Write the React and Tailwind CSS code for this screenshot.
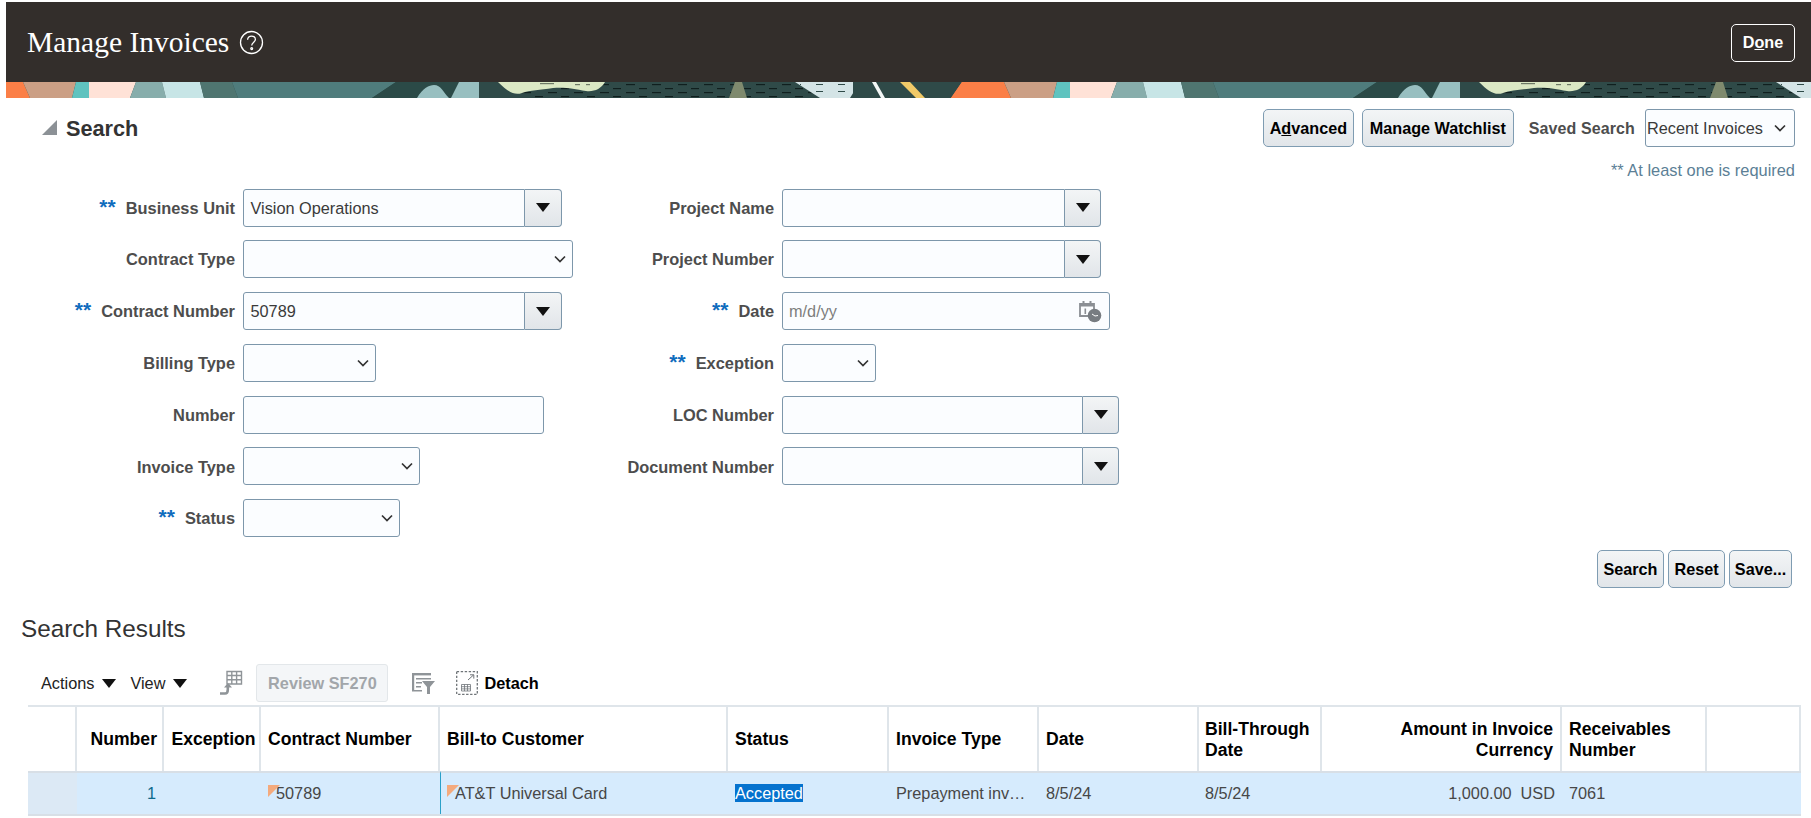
import React from "react";

const Chevron = ({ className = "" }) => (
  <svg width="14" height="14" viewBox="0 0 14 14" className={className} fill="none" stroke="#333" strokeWidth="1.7">
    <path d="M2 4.5 L7 9.5 L12 4.5" />
  </svg>
);

const Tri = ({ w = 14, h = 9 }) => (
  <svg width={w} height={h} viewBox="0 0 14 9"><path d="M0 0 H14 L7 9 Z" fill="#111" /></svg>
);

const inputCls = "h-[38px] border border-[#7d97ab] bg-[#fbfdff] rounded-[3px] flex items-center px-[6px] text-[16.3px] text-[#3a3a3a] shrink-0";
const gradient = "bg-gradient-to-b from-[#f3f5f6] to-[#e1e5e9]";

const Combo = ({ w, btn = 37, value }) => (
  <div className="flex h-[38px] shrink-0">
    <div style={{ width: w }} className="h-[38px] border border-[#7d97ab] bg-[#fbfdff] rounded-l-[3px] flex items-center pl-[6.5px] pt-[1px] text-[16.3px] text-[#3a3a3a]">{value}</div>
    <div style={{ width: btn }} className={`h-[38px] border border-l-0 border-[#7d97ab] rounded-r-[4px] flex items-center justify-center ${gradient}`}>
      <Tri />
    </div>
  </div>
);

const Select = ({ w }) => (
  <div style={{ width: w }} className={`${inputCls} justify-end pr-[5px]`}>
    <Chevron />
  </div>
);

const Row = ({ label, req, lw, gap, children }) => (
  <div className="flex items-center h-[38px]">
    <div style={{ width: lw, marginRight: gap }} className="pt-[1px] text-right text-[16.4px] font-bold text-[#4d4d4d] whitespace-nowrap shrink-0">
      {req && <span className="text-[#0f6cbd] text-[21px] leading-[16px] mr-[10px]">**</span>}
      {label}
    </div>
    {children}
  </div>
);

const Btn = ({ children, w, className = "" }) => (
  <button style={{ width: w }} className={`h-[38px] border border-[#7f9cb2] rounded-[5px] text-[16.2px] font-bold text-black flex items-center justify-center whitespace-nowrap ${gradient} ${className}`}>
    {children}
  </button>
);

const BannerTile = () => (
  <g>
    <polygon points="-19,0 23,0 30,16 -30,16" fill="#fb7f47" />
    <polygon points="23,0 76,0 72,16 30,16" fill="#cb9f85" />
    <polygon points="76,0 89,0 89,16 72,16" fill="#5fc3bf" />
    <polygon points="89,0 136,0 130,16 89,16" fill="#ffe2d7" />
    <polygon points="136,0 162,0 166,16 130,16" fill="#87adab" />
    <polygon points="162,0 200,0 204,16 166,16" fill="#c7e5e6" />
    <polygon points="200,0 232,0 238,16 204,16" fill="#4f7570" />
    <polygon points="232,0 396,0 372,16 238,16" fill="#4f7c7c" />
    <polygon points="396,0 482,0 482,16 372,16" fill="#2b4a47" />
    <path d="M417 16 C423 6 429 3 434 3 C441 3 443 10 449 16 Z" fill="#98bfc0" />
    <polygon points="459,0 479,0 479,16 451,16" fill="#98bfc0" />
    <rect x="479" y="0" width="341" height="16" fill="#2f4a48" />
    <rect x="520" y="0" width="300" height="16" fill="url(#dash)" />
    <path d="M498 0 L605 0 C601 7 594 10 586 9 C574 7 566 5 553 6 C540 8 530 8 522 11 C514 14 507 9 498 0 Z" fill="#dbe8c4" />
    <rect x="540" y="1" width="14" height="1.2" fill="#6d7a66" />
    <rect x="575" y="2" width="5" height="1.2" fill="#6d7a66" />
    <rect x="586" y="2" width="4" height="1.2" fill="#6d7a66" />
    <polygon points="735,0 742,0 747,16 729,16" fill="#7f8a6e" />
    <polygon points="795,0 860,0 850,16 820,16" fill="#d4e4e6" />
    <rect x="800" y="0" width="50" height="14" fill="url(#dash2)" />
    <rect x="853" y="0" width="112" height="16" fill="#2f4a48" />
    <polygon points="872,0 876,0 885,16 881,16" fill="#f4f7f6" />
    <polygon points="900,0 910,0 925,16 916,16" fill="#f1ca68" />
    <polygon points="962,0 1000,0 1000,16 951,16" fill="#fb7f47" />
  </g>
);

const Banner = () => (
  <svg width="1805" height="16" viewBox="6 0 1805 16" className="block">
    <defs>
      <pattern id="dash" width="26" height="8" patternUnits="userSpaceOnUse">
        <rect x="2" y="2" width="9" height="1.2" fill="#101f1e" />
        <rect x="15" y="6" width="8" height="1.2" fill="#101f1e" />
      </pattern>
      <pattern id="dash2" width="22" height="7" patternUnits="userSpaceOnUse">
        <rect x="2" y="2" width="7" height="1" fill="#2f4a48" />
      </pattern>
    </defs>
    <rect x="0" y="0" width="1811" height="16" fill="#2f4a48" />
    <BannerTile />
    <g transform="translate(981 0)"><BannerTile /></g>
    <g transform="translate(1962 0)"><BannerTile /></g>
  </svg>
);

const Help = () => (
  <svg width="25" height="25" viewBox="0 0 25 25" fill="none" stroke="#fff" strokeWidth="1.3">
    <circle cx="12.5" cy="12.5" r="11" />
    <path d="M8.6 9.8 C8.6 7.4 10.4 6.2 12.5 6.2 C14.8 6.2 16.4 7.6 16.4 9.6 C16.4 12.2 12.7 12.4 12.7 15.6" />
    <circle cx="12.7" cy="18.6" r="0.9" />
  </svg>
);

const CalClock = () => (
  <svg width="24" height="24" viewBox="0 0 24 24">
    <path d="M2 5 H16 V17 H2 Z" fill="none" stroke="#8b8f94" strokeWidth="1.8" />
    <rect x="2" y="4" width="14" height="3.5" fill="#8b8f94" />
    <rect x="4.5" y="2" width="2" height="3.5" fill="#8b8f94" />
    <rect x="11.5" y="2" width="2" height="3.5" fill="#8b8f94" />
    <rect x="6.5" y="9.5" width="1.6" height="5.5" fill="#8b8f94" />
    <circle cx="16.5" cy="16.5" r="6.8" fill="#777c81" />
    <path d="M14 15 L17 17 L20 16.5" stroke="#fff" strokeWidth="1" fill="none" />
  </svg>
);

const TableArrow = () => (
  <svg width="24" height="26" viewBox="0 0 24 26" fill="none" stroke="#8f9498" strokeWidth="1.4">
    <path d="M8 1.5 H22.5 V14 H8 Z M8 5.5 H22.5 M8 9.8 H22.5 M12.8 1.5 V14 M17.6 1.5 V14" />
    <path d="M1 23.5 H6 C8 23.5 8.8 22 8.8 19.5 V15" strokeWidth="2.6" />
    <path d="M5 17.5 L9 13 L13 17.5 Z" fill="#8f9498" stroke="none" />
  </svg>
);

const FilterLines = () => (
  <svg width="24" height="24" viewBox="0 0 24 24">
    <g fill="#8f9498">
      <rect x="1" y="2" width="19" height="2.4" />
      <rect x="1" y="2" width="2.2" height="18" />
      <rect x="5" y="7" width="15" height="1.5" />
      <rect x="5" y="11" width="6" height="1.5" />
      <rect x="5" y="15" width="5" height="1.5" />
      <rect x="1" y="19" width="10" height="1.5" />
      <path d="M11 10 H24 L19 16 V23 H16 V16 Z" />
    </g>
  </svg>
);

const DetachIcon = () => (
  <svg width="22" height="24" viewBox="0 0 22 24" fill="none" stroke="#6f7478">
    <rect x="0.7" y="0.7" width="20.6" height="22.6" strokeDasharray="2.4 1.6" strokeWidth="1.3" />
    <path d="M5.5 13.5 H14.5 V20 H5.5 Z M5.5 15.7 H14.5 M5.5 17.9 H14.5 M8.5 13.5 V20 M11.5 13.5 V20" strokeWidth="0.8" />
    <path d="M12 9 L17.5 4 M14 3.8 H17.8 V7.6" strokeWidth="1" />
  </svg>
);

const PeachTri = ({ left }) => (
  <svg width="12" height="12" viewBox="0 0 12 12" style={{ left }} className="absolute top-[12px]">
    <polygon points="0,0 12,0 0,12" fill="#f4aa7d" />
  </svg>
);

const head = "px-[7px] pt-[1px] flex items-center border-r-2 border-[#dfe5ea] text-[17.6px] font-bold text-black leading-[21px]";
const cell = "relative px-[7px] pb-[1px] flex items-center text-[16.3px] text-[#474747] whitespace-nowrap bg-[#d6ebfd] border-t-2 border-[#d8dfe6]";

export default function App() {
  return (
    <div className="relative w-[1811px] h-[818px] overflow-hidden bg-white pt-[2px] font-['Liberation_Sans',Arial,sans-serif]">
      <div className="pl-[6px]">
        <div className="h-[80px] bg-[#332e2b] flex items-center justify-between pl-[21px] pr-[16px]">
          <div className="flex items-center gap-[10px]">
            <span className="text-white text-[29.5px] font-['Liberation_Serif',serif]">Manage Invoices</span>
            <Help />
          </div>
          <button className="w-[64px] h-[38px] mt-[1px] border border-white rounded-[5px] text-white font-bold text-[16.2px]">
            D<u>o</u>ne
          </button>
        </div>
        <Banner />
      </div>

      <div className="flex items-center justify-between pt-[11px] pr-[16px]">
        <div className="flex items-center pl-[42px]">
          <svg width="15" height="15" viewBox="0 0 15 15"><polygon points="15,0 15,15 0,15" fill="#8c9196" /></svg>
          <span className="ml-[9px] pt-[2px] text-[21.7px] font-bold text-[#333]">Search</span>
        </div>
        <div className="flex items-center">
          <Btn w={91}>A<u>d</u>vanced</Btn>
          <Btn w={152} className="ml-[8px]">Manage Watchlist</Btn>
          <span className="ml-[15px] mr-[10px] pt-[1px] text-[16px] font-bold text-[#4d4d4d] tracking-[0.1px] whitespace-nowrap">Saved Search</span>
          <div className={`${inputCls} w-[150px] justify-between !px-[1px]`}>
            <span>Recent Invoices</span>
            <Chevron className="mr-[6px]" />
          </div>
        </div>
      </div>

      <div className="pr-[16px] text-right text-[16.4px] text-[#5c7f96] leading-[20px] mt-[13px]">** At least one is required</div>

      <div className="flex mt-[8.5px]">
        <div className="w-[600px] flex flex-col gap-[13.8px] shrink-0">
          <Row label="Business Unit" req lw={235} gap={8}><Combo w={282} value="Vision Operations" /></Row>
          <Row label="Contract Type" lw={235} gap={8}><Select w={330} /></Row>
          <Row label="Contract Number" req lw={235} gap={8}><Combo w={282} value="50789" /></Row>
          <Row label="Billing Type" lw={235} gap={8}><Select w={133} /></Row>
          <Row label="Number" lw={235} gap={8}><div className={`${inputCls} w-[301px]`} /></Row>
          <Row label="Invoice Type" lw={235} gap={8}><Select w={177} /></Row>
          <Row label="Status" req lw={235} gap={8}><Select w={157} /></Row>
        </div>
        <div className="flex flex-col gap-[13.8px]">
          <Row label="Project Name" lw={174} gap={8}><Combo w={283} btn={36} /></Row>
          <Row label="Project Number" lw={174} gap={8}><Combo w={283} btn={36} /></Row>
          <Row label="Date" req lw={174} gap={8}>
            <div className={`${inputCls} w-[328px] justify-between pr-[7px]`}>
              <span className="text-[#7d7d7d]">m/d/yy</span>
              <CalClock />
            </div>
          </Row>
          <Row label="Exception" req lw={174} gap={8}><Select w={94} /></Row>
          <Row label="LOC Number" lw={174} gap={8}><Combo w={301} btn={36} /></Row>
          <Row label="Document Number" lw={174} gap={8}><Combo w={301} btn={36} /></Row>
        </div>
      </div>

      <div className="flex justify-end gap-[4px] pr-[19px] mt-[13px]">
        <Btn w={67}>Search</Btn>
        <Btn w={57}>Reset</Btn>
        <Btn w={63}>Save...</Btn>
      </div>

      <div className="pl-[21px] mt-[27px] h-[28px] flex items-center text-[24.3px] text-[#333]">Search Results</div>

      <div className="flex items-center h-[38px] mt-[21px] pl-[41px] text-[16.3px] text-[#222]">
        <span>Actions</span>
        <span className="ml-[8px]"><Tri /></span>
        <span className="ml-[14px]">View</span>
        <span className="ml-[8px]"><Tri /></span>
        <span className="ml-[32px]"><TableArrow /></span>
        <button className="ml-[13px] w-[132px] h-[38px] border border-[#e3e7ea] rounded-[3px] bg-[#f4f6f8] font-bold text-[#a2a6aa]">Review SF270</button>
        <span className="ml-[23px]"><FilterLines /></span>
        <span className="ml-[21px]"><DetachIcon /></span>
        <span className="ml-[6px] font-bold text-black">Detach</span>
      </div>

      <div className="ml-[28px] mt-[3px] w-[1773px] grid grid-cols-[49px_87px_97px_179px_288px_161px_150px_160px_123px_240px_145px_94px] border-t-2 border-[#dfe5ea] border-b-2 border-b-[#d8dfe6]">
        <div className={`h-[64px] ${head}`} />
        <div className={`${head} justify-end !pr-[5px]`}>Number</div>
        <div className={`${head} !px-[7.5px] whitespace-nowrap`}>Exception</div>
        <div className={head}>Contract Number</div>
        <div className={head}>Bill-to Customer</div>
        <div className={head}>Status</div>
        <div className={head}>Invoice Type</div>
        <div className={head}>Date</div>
        <div className={`${head} !pl-[6px]`}>Bill-Through Date</div>
        <div className={`${head} justify-end text-right`}><span className="w-[170px]">Amount in Invoice Currency</span></div>
        <div className={head}>Receivables Number</div>
        <div className={head} />

        <div className="h-[43px] bg-[#dce9f5] border-t-2 border-[#d8dfe6]" />
        <div className={`${cell} justify-end !text-[#0f6a8c] !pr-[8px]`}>1</div>
        <div className={cell} />
        <div className={`${cell} !pl-[15px]`}><PeachTri left={7} />50789</div>
        <div className={`${cell} border-l border-l-[#2aa0c8] !pl-[14px]`}><PeachTri left={6} />AT&amp;T Universal Card</div>
        <div className={cell}><span className="bg-[#0572ce] text-white h-[18px] leading-[18px]">Accepted</span></div>
        <div className={cell}>Prepayment inv…</div>
        <div className={cell}>8/5/24</div>
        <div className={`${cell} !pl-[6px]`}>8/5/24</div>
        <div className={`${cell} justify-end`}>1,000.00&nbsp; USD</div>
        <div className={cell}>7061</div>
        <div className={cell} />
      </div>
    </div>
  );
}
